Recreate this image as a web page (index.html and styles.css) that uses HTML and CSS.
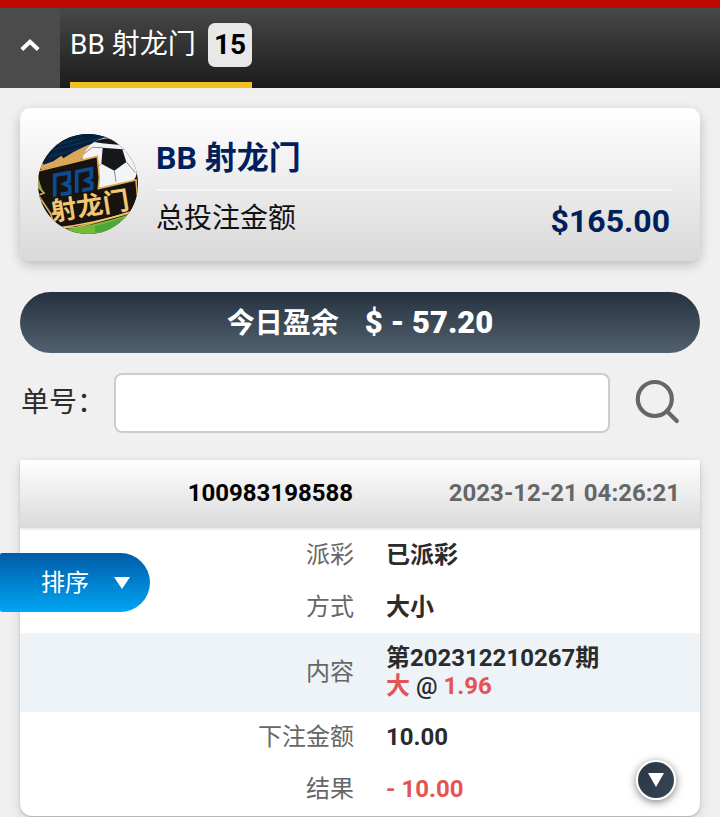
FILE: index.html
```html
<!DOCTYPE html>
<html lang="zh-CN">
<head>
<meta charset="utf-8">
<title>BB 射龙门</title>
<link rel="stylesheet" href="styles.css">
</head>
<body>
<header class="topbar">
  <button class="collapse" aria-label="返回"><svg width="20" height="14" viewBox="0 0 20 14"><path d="M1.8 11.5L10 3.8l8.2 7.7" fill="none" stroke="#fff" stroke-width="4"/></svg></button>
  <nav class="tab"><span class="tab-name">BB 射龙门</span><span class="badge">15</span></nav>
</header>
<main>
  <section class="summary">
    <svg class="logo" viewBox="24 26 300 300" role="img">
      <defs><clipPath id="disc"><circle cx="174" cy="176" r="150"/></clipPath></defs>
      <g clip-path="url(#disc)">
        <rect x="20" y="20" width="310" height="310" fill="#11100f"/>
        <path d="M20 20H260L190 65Q145 85 95 105L20 120Z" fill="#061f3d"/>
        <path d="M35 82l180-45M50 67l110-29M55 95l125-34" stroke="#0b3158" stroke-width="4"/>
        <path d="M24 130L38 103 40 118 70 108 94 91 100 99Q155 60 245 35L215 52Q170 75 150 108L38 132Z" fill="#dba75a"/>
        <circle cx="239" cy="121" r="85" fill="#f3f4f6"/>
        <path d="M218 67L277 72 289 110 253 136 214 115ZM192 50Q240 26 285 53L262 58 216 54ZM302 68Q325 90 323 136L311 112Z" fill="#17181b"/>
        <path d="M218 67L187 66 160 87M214 115L199 129 208 156M253 136L258 169M289 110L316 142M277 72L299 70" fill="none" stroke="#8b8d92" stroke-width="3"/>
        <path d="M24 137L202 93 208 157 205 190 318 164 326 255 140 306 75 308 62 265 25 210 42 203 24 184Z" fill="#17130f" stroke="#dfaa55" stroke-width="5"/>
        <path d="M24 145Q28 176 42 203L25 188Z" fill="#8cae4b"/>
        <path d="M78 316Q200 300 310 263L305 335H80Z" fill="#74b83c"/>
        <path d="M75 309Q195 296 318 255" fill="none" stroke="#efc56c" stroke-width="5"/>
        <path d="M195 303Q235 292 280 277L250 312 196 324Z" fill="#4ca839"/>
        <g fill="none" stroke="#0d4c94" stroke-width="11">
          <path d="M74 214V150L117 142V168L103 176 119 184V203L92 207"/>
          <path d="M140 202V139L184 130V156L169 165 185 173V189L157 195"/>
        </g>
        <text class="logo-text" transform="translate(66 287) rotate(-9)" textLength="238" lengthAdjust="spacingAndGlyphs">射龙门</text>
      </g>
    </svg>
    <div class="summary-info">
      <h1>BB 射龙门</h1>
      <div class="total"><span>总投注金额</span><strong>$165.00</strong></div>
    </div>
  </section>
  <section class="profit"><span>今日盈余</span><strong>$ - 57.20</strong></section>
  <form class="search">
    <label for="number">单号：</label><input id="number" type="text">
    <button type="button" aria-label="搜索"><svg width="48" height="48" viewBox="0 0 48 48" fill="none" stroke="#666" stroke-width="4.2" stroke-linecap="round"><circle cx="20.8" cy="20" r="17"/><path d="M33 32.2l9.8 9.8"/></svg></button>
  </form>
  <article class="bet">
    <header class="bet-head"><span>100983198588</span><time>2023-12-21 04:26:21</time></header>
    <dl>
      <div class="row first"><dt>派彩</dt><dd>已派彩</dd></div>
      <div class="row"><dt>方式</dt><dd>大小</dd></div>
      <div class="row content"><dt>内容</dt><dd>第202312210267期<br><span class="red">大</span> <span class="at">@</span> <span class="red">1.96</span></dd></div>
      <div class="row amount"><dt>下注金额</dt><dd>10.00</dd></div>
      <div class="row amount"><dt>结果</dt><dd class="red">- 10.00</dd></div>
    </dl>
  </article>
</main>
<button class="sort"><span>排序</span><svg width="16" height="12" viewBox="0 0 16 12"><path d="M0 0h16L8 12z" fill="#fff"/></svg></button>
<button class="down" aria-label="向下"><svg width="16" height="14" viewBox="0 0 16 14"><path d="M0 0h16L8 14z" fill="#fff"/></svg></button>
</body>
</html>
```
FILE: styles.css
```css
* { box-sizing: border-box; }
body { margin: 0; height: 817px; overflow: hidden; background: #f0f0f0; color: #2b2b2b; font-family: Roboto, "Noto Sans CJK SC", sans-serif; }
button { border: 0; padding: 0; background: none; font: inherit; color: inherit; }
svg { display: block; }
h1, dl, dd { margin: 0; }

.topbar { display: flex; height: 88px; border-top: 8px solid #bd0800; background: linear-gradient(#484848, #1b1b1b); }
.collapse { display: flex; align-items: center; justify-content: center; width: 60px; height: 80px; padding-bottom: 7px; background: #4b4b4b; }
.tab { display: flex; justify-content: space-between; width: 182px; height: 80px; margin-left: 10px; padding-top: 15px; border-bottom: 6px solid #f1c21f; color: #fff; font-size: 28px; line-height: 44px; }
.tab-name { white-space: nowrap; }
.badge { width: 44px; height: 44px; border-radius: 7px; background: #e8e8e8; color: #000; text-align: center; font-weight: 700; }

main { padding: 20px 20px 0; }
.summary { display: flex; height: 153px; padding: 25px 27px 0 18px; border-radius: 11px; background: linear-gradient(#fff, #d9d9d9); box-shadow: 0 4px 12px rgba(0, 0, 0, .22); }
.logo { width: 100px; height: 100px; margin-top: 1px; flex: none; }
.logo-text { fill: #f2c672; font-family: "Noto Sans CJK SC", sans-serif; font-size: 77px; font-weight: 700; }
.summary-info { flex: 1; margin-left: 18px; }
h1 { height: 58px; border-bottom: 2px solid #f5f5f5; color: #00205c; font-size: 32px; font-weight: 700; line-height: 50px; }
.total { display: flex; justify-content: space-between; padding-right: 3px; color: #111; font-size: 28px; line-height: 56px; }
.total strong { color: #00205c; font-size: 32px; line-height: 61px; }

.profit { display: flex; align-items: center; justify-content: center; gap: 26px; height: 61px; margin-top: 31px; border-radius: 31px; background: linear-gradient(#25313e, #52616f); color: #fff; font-size: 28px; font-weight: 700; }
.profit span { padding-bottom: 3px; }
.profit strong { font-size: 31px; }

.search { display: flex; align-items: center; height: 60px; margin-top: 20px; }
.search label { width: 94px; padding-left: 1px; white-space: nowrap; font-size: 28px; line-height: 40px; }
.search input { width: 496px; height: 60px; border: 2px solid #ccc; border-radius: 8px; background: #fff; }
.search button { margin-left: 24px; }

.bet { height: 356px; margin-top: 27px; border-radius: 0 0 12px 12px; background: #fff; box-shadow: 0 1px 2px rgba(0, 0, 0, .2), 0 4px 12px rgba(0, 0, 0, .14); }
.bet-head { display: flex; height: 70px; padding-right: 20px; border-bottom: 2px solid #eee; background: linear-gradient(#fff, #dadada); color: #000; font-size: 24px; font-weight: 700; line-height: 66px; }
.bet-head span { width: 333px; text-align: right; }
.bet-head time { flex: 1; color: #666; text-align: right; }
.row { display: flex; align-items: center; height: 52px; font-size: 24px; line-height: 28px; }
.first { height: 51px; padding-bottom: 1px; }
.row dt { width: 334px; margin-right: 32px; color: #666; text-align: right; }
.row dd { font-weight: 700; }
.content { height: 79px; padding-bottom: 1px; background: #edf3f7; }
.amount { padding-bottom: 2px; }
.at { font-weight: 500; }
.row .red, .row dd.red { color: #e45454; }

.sort { position: absolute; left: 0; top: 553px; display: flex; align-items: center; width: 150px; height: 59px; padding-left: 41px; gap: 25px; border-radius: 2px 30px 30px 2px; background: linear-gradient(#005ba7, #00a5f4); color: #fff; font-size: 24px; }
.sort span { padding-bottom: 5px; }
.down { position: absolute; left: 636px; top: 760px; display: flex; align-items: center; justify-content: center; width: 40px; height: 40px; border: 2px solid #fff; border-radius: 50%; background: linear-gradient(120deg, #2a3644, #364655); box-shadow: 0 2px 9px rgba(0, 0, 0, .5); }
```
